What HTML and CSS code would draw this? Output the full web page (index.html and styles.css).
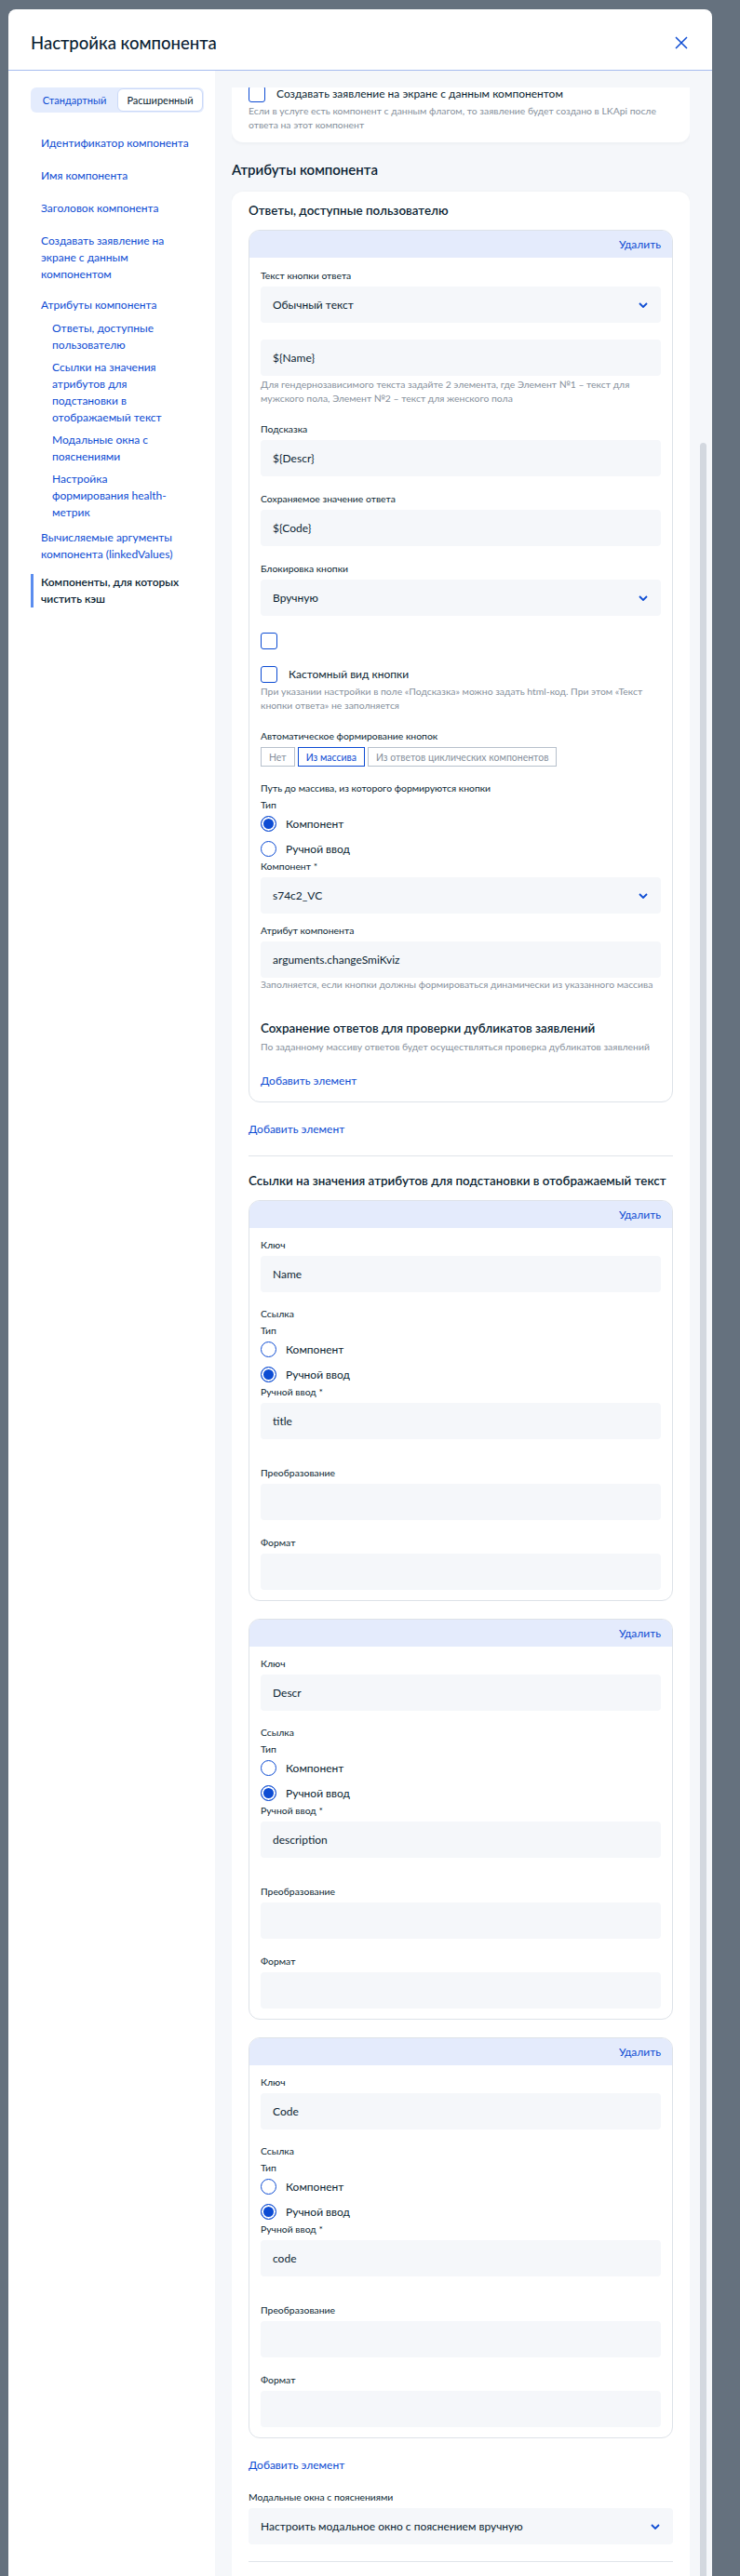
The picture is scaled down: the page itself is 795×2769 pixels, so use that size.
FILE: index.html
```html
<!DOCTYPE html>
<html lang="ru">
<head>
<meta charset="utf-8">
<title>Настройка компонента</title>
<link rel="stylesheet" href="styles.css">
</head>
<body>
<div class="modal">
  <header class="modal-header">
    <h1 class="modal-title">Настройка компонента</h1>
    <button class="close" type="button" aria-label="Закрыть">
      <svg width="14" height="14" viewBox="0 0 14 14"><path d="M1 1L13 13M13 1L1 13" stroke="#0d4cd3" stroke-width="1.5" fill="none"/></svg>
    </button>
  </header>
  <div class="modal-body">
    <aside class="sidebar">
      <div class="tabs">
        <span class="tab">Стандартный</span>
        <span class="tab tab-on">Расширенный</span>
      </div>
      <ul class="nav">
        <li class="nav-item">Идентификатор компонента</li>
        <li class="nav-item">Имя компонента</li>
        <li class="nav-item">Заголовок компонента</li>
        <li class="nav-item">Создавать заявление на экране с данным компонентом</li>
        <li class="nav-item nav-item-sm">Атрибуты компонента
          <ul class="nav-sub">
            <li>Ответы, доступные пользователю</li>
            <li>Ссылки на значения атрибутов для подстановки в отображаемый текст</li>
            <li>Модальные окна с пояснениями</li>
            <li>Настройка формирования health-метрик</li>
          </ul>
        </li>
        <li class="nav-item nav-item-after">Вычисляемые аргументы компонента (linkedValues)</li>
        <li class="nav-item nav-item-active">Компоненты, для которых чистить кэш</li>
      </ul>
    </aside>

    <main class="content">
      <div class="viewport">
        <section class="card card-cut">
          <label class="check-row">
            <span class="checkbox"></span>
            <span class="check-label">Создавать заявление на экране с данным компонентом</span>
          </label>
          <p class="help">Если в услуге есть компонент с данным флагом, то заявление будет создано в LKApi после ответа на этот компонент</p>
        </section>

        <h2 class="section-title">Атрибуты компонента</h2>

        <section class="card card-main">
          <h3 class="sub-title">Ответы, доступные пользователю</h3>

          <div class="item">
            <div class="item-head"><span class="link-sm">Удалить</span></div>
            <div class="item-body item-body-first">
              <div class="label">Текст кнопки ответа</div>
              <div class="input select"><span>Обычный текст</span><svg class="chev" width="10" height="6" viewBox="0 0 10 6"><path d="M1 1L5 5L9 1" stroke="#0d4cd3" stroke-width="1.8" fill="none"/></svg></div>
              <div class="input gap-18">${Name}</div>
              <p class="help help-2">Для гендернозависимого текста задайте 2 элемента, где Элемент №1 – текст для мужского пола, Элемент №2 – текст для женского пола</p>
              <div class="label gap-17">Подсказка</div>
              <div class="input">${Descr}</div>
              <div class="label gap-16">Сохраняемое значение ответа</div>
              <div class="input">${Code}</div>
              <div class="label gap-16">Блокировка кнопки</div>
              <div class="input select"><span>Вручную</span><svg class="chev" width="10" height="6" viewBox="0 0 10 6"><path d="M1 1L5 5L9 1" stroke="#0d4cd3" stroke-width="1.8" fill="none"/></svg></div>
              <span class="checkbox gap-18"></span>
              <label class="check-row gap-18">
                <span class="checkbox"></span>
                <span class="check-label">Кастомный вид кнопки</span>
              </label>
              <p class="help help-2">При указании настройки в поле «Подсказка» можно задать html-код. При этом «Текст кнопки ответа» не заполняется</p>
              <div class="label gap-17">Автоматическое формирование кнопок</div>
              <div class="segments">
                <span class="seg">Нет</span>
                <span class="seg seg-on">Из массива</span>
                <span class="seg">Из ответов циклических компонентов</span>
              </div>
              <div class="label label-flat gap-15">Путь до массива, из которого формируются кнопки</div>
              <div class="label label-flat gap-2">Тип</div>
              <div class="radios">
                <label class="radio-row"><span class="radio radio-on"></span>Компонент</label>
                <label class="radio-row"><span class="radio"></span>Ручной ввод</label>
              </div>
              <div class="label">Компонент *</div>
              <div class="input select"><span>s74c2_VC</span><svg class="chev" width="10" height="6" viewBox="0 0 10 6"><path d="M1 1L5 5L9 1" stroke="#0d4cd3" stroke-width="1.8" fill="none"/></svg></div>
              <div class="label gap-10">Атрибут компонента</div>
              <div class="input">arguments.changeSmiKviz</div>
              <p class="help help-0 one-line">Заполняется, если кнопки должны формироваться динамически из указанного массива</p>
              <h4 class="sub-title gap-29">Сохранение ответов для проверки дубликатов заявлений</h4>
              <p class="help help-3 one-line">По заданному массиву ответов будет осуществляться проверка дубликатов заявлений</p>
              <a class="link gap-19">Добавить элемент</a>
            </div>
          </div>

          <a class="link gap-19">Добавить элемент</a>
          <hr class="divider">

          <h3 class="sub-title gap-16 one-line">Ссылки на значения атрибутов для подстановки в отображаемый текст</h3>

          <div class="item">
            <div class="item-head"><span class="link-sm">Удалить</span></div>
            <div class="item-body">
              <div class="label">Ключ</div>
              <div class="input">Name</div>
              <div class="label label-flat gap-15">Ссылка</div>
              <div class="label label-flat gap-2">Тип</div>
              <div class="radios">
                <label class="radio-row"><span class="radio"></span>Компонент</label>
                <label class="radio-row"><span class="radio radio-on"></span>Ручной ввод</label>
              </div>
              <div class="label">Ручной ввод *</div>
              <div class="input">title</div>
              <div class="label gap-28">Преобразование</div>
              <div class="input"></div>
              <div class="label gap-16">Формат</div>
              <div class="input"></div>
            </div>
          </div>

          <div class="item item-next">
            <div class="item-head"><span class="link-sm">Удалить</span></div>
            <div class="item-body">
              <div class="label">Ключ</div>
              <div class="input">Descr</div>
              <div class="label label-flat gap-15">Ссылка</div>
              <div class="label label-flat gap-2">Тип</div>
              <div class="radios">
                <label class="radio-row"><span class="radio"></span>Компонент</label>
                <label class="radio-row"><span class="radio radio-on"></span>Ручной ввод</label>
              </div>
              <div class="label">Ручной ввод *</div>
              <div class="input">description</div>
              <div class="label gap-28">Преобразование</div>
              <div class="input"></div>
              <div class="label gap-16">Формат</div>
              <div class="input"></div>
            </div>
          </div>

          <div class="item item-next">
            <div class="item-head"><span class="link-sm">Удалить</span></div>
            <div class="item-body">
              <div class="label">Ключ</div>
              <div class="input">Code</div>
              <div class="label label-flat gap-15">Ссылка</div>
              <div class="label label-flat gap-2">Тип</div>
              <div class="radios">
                <label class="radio-row"><span class="radio"></span>Компонент</label>
                <label class="radio-row"><span class="radio radio-on"></span>Ручной ввод</label>
              </div>
              <div class="label">Ручной ввод *</div>
              <div class="input">code</div>
              <div class="label gap-28">Преобразование</div>
              <div class="input"></div>
              <div class="label gap-16">Формат</div>
              <div class="input"></div>
            </div>
          </div>

          <a class="link gap-19">Добавить элемент</a>
          <div class="label gap-16">Модальные окна с пояснениями</div>
          <div class="input select"><span>Настроить модальное окно с пояснением вручную</span><svg class="chev" width="10" height="6" viewBox="0 0 10 6"><path d="M1 1L5 5L9 1" stroke="#0d4cd3" stroke-width="1.8" fill="none"/></svg></div>
          <hr class="divider">
        </section>
      </div>
      <div class="scroll-thumb"></div>
    </main>
  </div>
</div>
</body>
</html>
```

FILE: styles.css
```css
* { box-sizing: border-box; }

html, body {
  margin: 0;
  padding: 0;
}

body {
  width: 795px;
  height: 2769px;
  overflow: hidden;
  background: #65717e;
  font-family: Lato, "Noto Sans", "DejaVu Sans", sans-serif;
  color: #0b1f33;
}

.modal {
  margin: 10px 0 0 9px;
  width: 756px;
  height: 2759px;
  background: #fff;
  border-radius: 8px 8px 0 0;
  overflow: hidden;
  display: flex;
  flex-direction: column;
}

.modal-header {
  height: 66px;
  flex: none;
  padding: 6px 24px 0 24px;
  display: flex;
  align-items: center;
  justify-content: space-between;
  border-bottom: 1px solid #a6bcef;
}

.modal-title {
  margin: 0;
  font-size: 18.5px;
  font-weight: 500;
  line-height: 24px;
}

.close {
  border: 0;
  background: none;
  padding: 0;
  width: 14px;
  height: 14px;
  margin-right: 2px;
  display: flex;
}

.modal-body {
  flex: 1;
  display: grid;
  grid-template-columns: 222px 1fr;
  min-height: 0;
}

/* Sidebar */
.sidebar {
  padding: 18px 15px 0 24px;
}

.tabs {
  display: flex;
  width: 186px;
  height: 27px;
  padding: 1px;
  background: #e4ecfd;
  border-radius: 6px;
}

.tab {
  flex: 1;
  display: flex;
  align-items: center;
  justify-content: center;
  font-size: 11px;
  color: #0d4cd3;
  border-radius: 6px;
}

.tab-on {
  flex: 0 0 92px;
  background: #fff;
  border: 1px solid #cbd9f8;
  color: #0b1f33;
}

.nav {
  list-style: none;
  margin: 24px 0 0;
  padding: 0 0 0 11px;
  font-size: 12px;
  line-height: 18px;
  color: #0d4cd3;
}

.nav-item + .nav-item { margin-top: 17px; }
.nav-item.nav-item-sm { margin-top: 15px; }
.nav-item.nav-item-after { margin-top: 9px; }

.nav-item-active {
  color: #0b1f33;
  font-weight: 600;
  margin-left: -11px;
  padding-left: 8px;
  border-left: 3px solid #5b8def;
}
.nav-item.nav-item-active { margin-top: 12px; }

.nav-sub {
  list-style: none;
  margin: 7px 0 0;
  padding: 0 25px 0 12px;
}

.nav-sub li + li { margin-top: 6px; }

/* Content */
.content {
  position: relative;
  background: #f5f7fa;
  padding: 18px 24px 0 18px;
  min-height: 0;
  overflow: hidden;
}

.viewport {
  height: 100%;
  overflow: hidden;
}

.scroll-thumb {
  position: absolute;
  right: 6px;
  top: 400px;
  bottom: 0;
  width: 7px;
  background: #d3d8df;
  border-radius: 4px 4px 0 0;
}

.card {
  background: #fff;
  border-radius: 12px;
  box-shadow: 0 1px 4px rgba(11, 31, 51, 0.05);
}

.card-cut {
  margin-top: -20px;
  padding: 18px 18px 11px;
}

.card-main {
  margin-top: 13px;
  padding: 10px 18px 40px;
  display: flex;
  flex-direction: column;
  align-items: stretch;
}

.section-title {
  margin: 18px 0 0;
  font-size: 15px;
  line-height: 22px;
  font-weight: 600;
}

.sub-title {
  margin: 0;
  font-size: 13.4px;
  line-height: 20px;
  font-weight: 600;
}

.one-line { white-space: nowrap; }

.check-row {
  display: flex;
  align-items: center;
  height: 18px;
  gap: 12px;
}

.check-label {
  font-size: 12px;
  line-height: 12px;
}

.checkbox {
  flex: none;
  display: block;
  width: 18px;
  height: 18px;
  border: 1.5px solid #0d4cd3;
  border-radius: 3px;
  background: #fff;
}

.help {
  margin: 2px 0 0;
  font-size: 10.4px;
  line-height: 15px;
  color: #86909c;
}
.help-0 { margin-top: 0; }
.help-3 { margin-top: 3px; }

/* Items */
.item {
  margin-top: 11px;
  border: 1px solid #dde2e8;
  border-radius: 12px;
  overflow: hidden;
}

.item-next { margin-top: 19px; }

.item-head {
  height: 29px;
  background: #e4ebfc;
  display: flex;
  align-items: center;
  justify-content: flex-end;
  padding: 0 12px;
}

.link-sm {
  font-size: 12px;
  color: #0d4cd3;
}

.item-body {
  padding: 10px 12px 11px;
  display: flex;
  flex-direction: column;
  align-items: stretch;
}

.item-body-first { padding-top: 11px; padding-bottom: 12px; }

.label {
  font-size: 10.4px;
  line-height: 16px;
  margin-bottom: 4px;
  color: #0b1f33;
}

.label-flat { margin-bottom: 0; }

.input {
  height: 39px;
  background: #f5f7fa;
  border-radius: 4px;
  padding: 0 13px;
  display: flex;
  align-items: center;
  font-size: 12px;
}

.select {
  justify-content: space-between;
  padding-right: 14px;
}

.chev { flex: none; }

.segments {
  display: flex;
  gap: 3px;
}

.seg {
  height: 21px;
  padding: 0 8px;
  border: 1px solid #b7c0cc;
  display: flex;
  align-items: center;
  font-size: 10.5px;
  color: #86909c;
}

.seg-on {
  border-color: #0d4cd3;
  color: #0d4cd3;
}

.radios {
  margin-top: 1px;
  display: flex;
  flex-direction: column;
  gap: 5px;
}

.radio-row {
  height: 22px;
  display: flex;
  align-items: center;
  gap: 10px;
  font-size: 12px;
}

.radio {
  flex: none;
  width: 17px;
  height: 17px;
  border: 1.5px solid #0d4cd3;
  border-radius: 50%;
  background: #fff;
}

.radio-on {
  background: #0d4cd3;
  box-shadow: inset 0 0 0 2px #fff;
}

.link {
  font-size: 12px;
  line-height: 20px;
  color: #0d4cd3;
  cursor: pointer;
}

.divider {
  margin: 18px 0 0;
  border: 0;
  height: 1px;
  background: #e0e4ea;
}

.gap-2 { margin-top: 2px; }
.gap-10 { margin-top: 10px; }
.gap-15 { margin-top: 15px; }
.gap-16 { margin-top: 16px; }
.gap-17 { margin-top: 17px; }
.gap-18 { margin-top: 18px; }
.gap-19 { margin-top: 19px; }
.gap-28 { margin-top: 28px; }
.gap-29 { margin-top: 29px; }
```
